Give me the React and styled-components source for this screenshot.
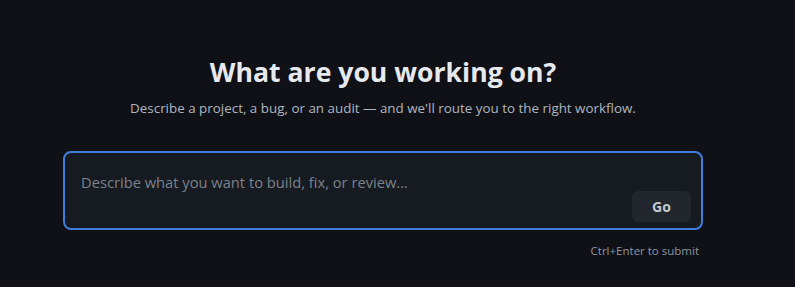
import React from "react";
import styled, { createGlobalStyle } from "styled-components";

const Global = createGlobalStyle`
  html, body { margin: 0; padding: 0; background: #0f1116; }
  body { font-family: "Open Sans", "Noto Sans", sans-serif; }
  * { box-sizing: border-box; }
`;

const Page = styled.div`
  width: 766px;
  min-height: 287px;
  display: flex;
  flex-direction: column;
  align-items: center;
  padding-top: 55px;
`;

const Title = styled.h1`
  margin: 0;
  font-size: 26.6px;
  font-weight: 700;
  color: #e6e9ee;
  line-height: 34px;
`;

const Subtitle = styled.p`
  margin: 9px 0 0;
  font-size: 13.4px;
  color: #aeb6c1;
  line-height: 20px;
`;

const Column = styled.div`
  width: 640px;
  margin-top: 33px;
  display: flex;
  flex-direction: column;
`;

const InputBox = styled.div`
  height: 79px;
  border: 2px solid #3f7ddb;
  border-radius: 8px;
  background: #161a21;
  display: flex;
  align-items: flex-end;
  padding: 0 10px 6px 16px;
`;

const Field = styled.textarea`
  flex: 1;
  align-self: stretch;
  resize: none;
  border: none;
  outline: none;
  background: transparent;
  color: #e6e9ee;
  font-family: inherit;
  font-size: 14.7px;
  line-height: 20px;
  padding: 19px 0 0;
  caret-color: #e6e9ee;
  &::placeholder { color: #7b828c; }
`;

const GoButton = styled.button`
  width: 59px;
  height: 31px;
  border: none;
  border-radius: 6px;
  background: #22272e;
  color: #c3c9d1;
  font-family: inherit;
  font-size: 14px;
  font-weight: 700;
  cursor: pointer;
`;

const Hint = styled.div`
  align-self: flex-end;
  margin-top: 13px;
  margin-right: 4px;
  font-size: 11.5px;
  color: #8d96a1;
`;

export default function App() {
  return (
    <>
      <Global />
      <Page>
        <Title>What are you working on?</Title>
        <Subtitle>
          Describe a project, a bug, or an audit — and we'll route you to the right workflow.
        </Subtitle>
        <Column>
          <InputBox>
            <Field autoFocus placeholder="Describe what you want to build, fix, or review..." />
            <GoButton>Go</GoButton>
          </InputBox>
          <Hint>Ctrl+Enter to submit</Hint>
        </Column>
      </Page>
    </>
  );
}
